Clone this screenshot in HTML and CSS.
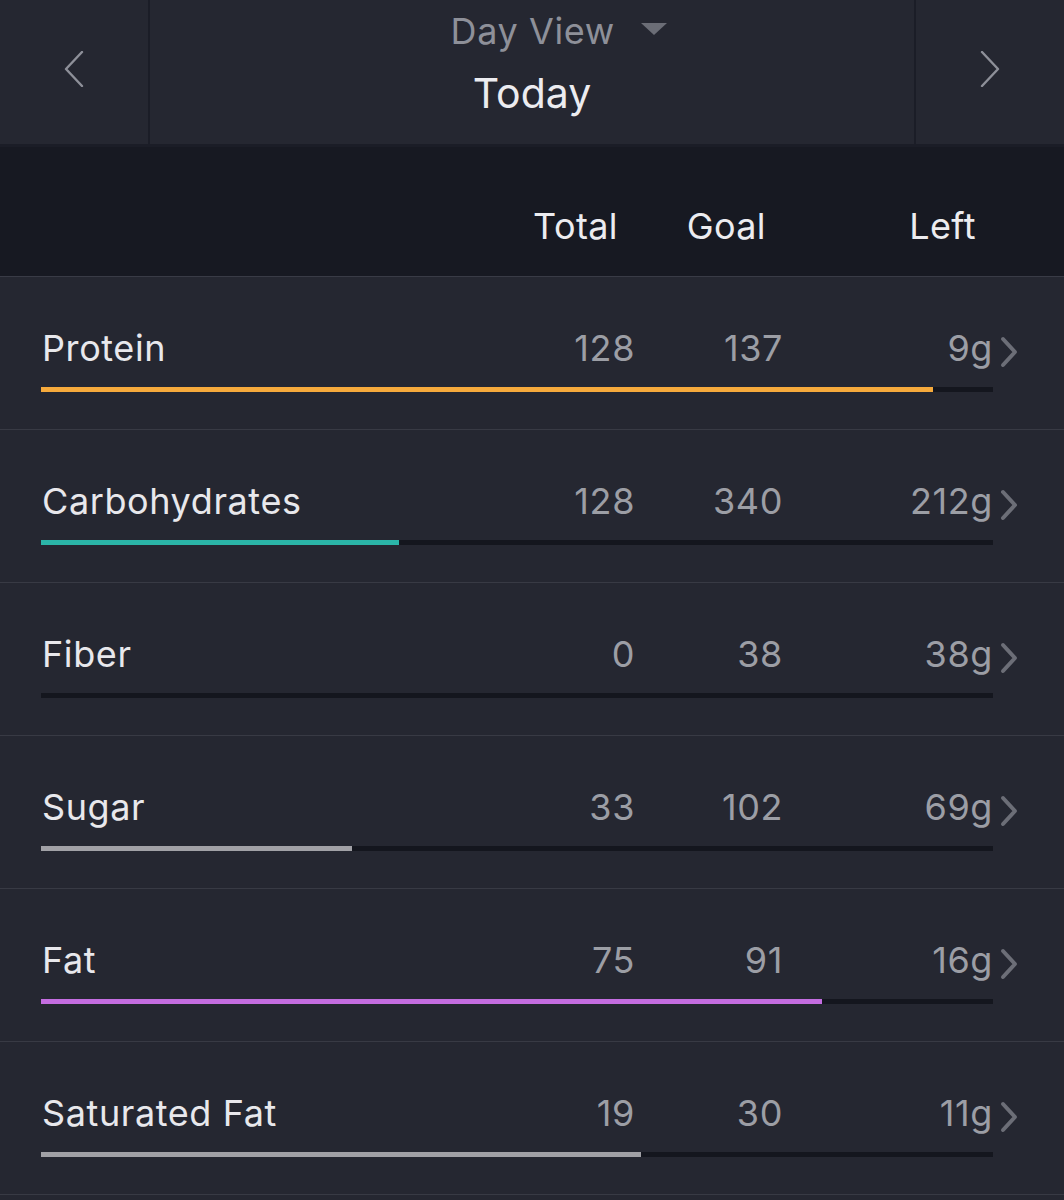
FILE: index.html
```html
<!DOCTYPE html>
<html lang="en">
<head>
    <meta charset="UTF-8">
    <meta name="viewport" content="width=device-width, initial-scale=1.0">
    <title>Nutrients</title>
    <link rel="stylesheet" href="styles.css">
</head>
<body>

    <!-- Date navigation -->
    <div class="nav">
        <div class="nav-btn">
            <svg width="20" height="36" viewBox="0 0 20 36"><path d="M18 1 L2 18 L18 35" fill="none" stroke="#8e9099" stroke-width="2.4" stroke-linecap="round" stroke-linejoin="round"/></svg>
        </div>
        <div class="nav-title">
            <div class="view">Day View <span class="caret"></span></div>
            <div class="day">Today</div>
        </div>
        <div class="nav-btn">
            <svg width="20" height="36" viewBox="0 0 20 36"><path d="M2 1 L18 18 L2 35" fill="none" stroke="#8e9099" stroke-width="2.4" stroke-linecap="round" stroke-linejoin="round"/></svg>
        </div>
    </div>

    <div class="head">
        <span></span>
        <span>Total</span>
        <span>Goal</span>
        <span>Left</span>
    </div>

    <div class="row">
        <div class="line">
            <span class="name">Protein</span>
            <span class="num">128</span>
            <span class="num">137</span>
            <span class="num">9g</span>
            <span class="chev"><svg width="20" height="32" viewBox="0 0 20 32"><path d="M4 3 L16 16 L4 29" fill="none" stroke="#6c6e77" stroke-width="4" stroke-linecap="round" stroke-linejoin="round"/></svg></span>
        </div>
        <div class="bar"><div class="fill protein" style="width: 93.7%"></div></div>
    </div>

    <div class="row">
        <div class="line">
            <span class="name">Carbohydrates</span>
            <span class="num">128</span>
            <span class="num">340</span>
            <span class="num">212g</span>
            <span class="chev"><svg width="20" height="32" viewBox="0 0 20 32"><path d="M4 3 L16 16 L4 29" fill="none" stroke="#6c6e77" stroke-width="4" stroke-linecap="round" stroke-linejoin="round"/></svg></span>
        </div>
        <div class="bar"><div class="fill carbs" style="width: 37.6%"></div></div>
    </div>

    <div class="row">
        <div class="line">
            <span class="name">Fiber</span>
            <span class="num">0</span>
            <span class="num">38</span>
            <span class="num">38g</span>
            <span class="chev"><svg width="20" height="32" viewBox="0 0 20 32"><path d="M4 3 L16 16 L4 29" fill="none" stroke="#6c6e77" stroke-width="4" stroke-linecap="round" stroke-linejoin="round"/></svg></span>
        </div>
        <div class="bar"><div class="fill" style="width: 0%"></div></div>
    </div>

    <div class="row">
        <div class="line">
            <span class="name">Sugar</span>
            <span class="num">33</span>
            <span class="num">102</span>
            <span class="num">69g</span>
            <span class="chev"><svg width="20" height="32" viewBox="0 0 20 32"><path d="M4 3 L16 16 L4 29" fill="none" stroke="#6c6e77" stroke-width="4" stroke-linecap="round" stroke-linejoin="round"/></svg></span>
        </div>
        <div class="bar"><div class="fill grey" style="width: 32.7%"></div></div>
    </div>

    <div class="row">
        <div class="line">
            <span class="name">Fat</span>
            <span class="num">75</span>
            <span class="num">91</span>
            <span class="num">16g</span>
            <span class="chev"><svg width="20" height="32" viewBox="0 0 20 32"><path d="M4 3 L16 16 L4 29" fill="none" stroke="#6c6e77" stroke-width="4" stroke-linecap="round" stroke-linejoin="round"/></svg></span>
        </div>
        <div class="bar"><div class="fill fat" style="width: 82%"></div></div>
    </div>

    <div class="row">
        <div class="line">
            <span class="name">Saturated Fat</span>
            <span class="num">19</span>
            <span class="num">30</span>
            <span class="num">11g</span>
            <span class="chev"><svg width="20" height="32" viewBox="0 0 20 32"><path d="M4 3 L16 16 L4 29" fill="none" stroke="#6c6e77" stroke-width="4" stroke-linecap="round" stroke-linejoin="round"/></svg></span>
        </div>
        <div class="bar"><div class="fill grey" style="width: 63%"></div></div>
    </div>

</body>
</html>
```

FILE: styles.css
```css
body {
    margin: 0;
    background-color: #252731;
    font-family: Inter, "Noto Sans", sans-serif;
    color: #e8e8ec;
}
.nav {
    display: flex;
    height: 144px;
    border-bottom: 3px solid #1b1d27;
}
.nav-btn {
    width: 150px;
    display: flex;
    align-items: center;
    justify-content: center;
    padding-bottom: 6px;
    box-sizing: border-box;
}
.nav-btn:first-child {
    border-right: 2px solid #1b1d27;
}
.nav-btn:last-child {
    border-left: 2px solid #1b1d27;
}
.nav-title {
    flex: 1;
    text-align: center;
    padding-top: 9px;
}
.view {
    font-size: 36px;
    letter-spacing: 0.6px;
    color: #8e9099;
    line-height: 44px;
    padding-left: 54px;
}
.caret {
    display: inline-block;
    width: 0;
    height: 0;
    border-left: 13px solid transparent;
    border-right: 13px solid transparent;
    border-top: 12px solid #6b6d76;
    margin-left: 16px;
    vertical-align: 9px;
}
.day {
    font-size: 41px;
    line-height: 50px;
    margin-top: 15px;
    color: #ececf0;
}
.head {
    display: grid;
    grid-template-columns: 1fr 110px 148px 210px;
    padding-right: 88px;
    height: 130px;
    background-color: #171922;
    border-bottom: 1px solid #393b46;
    font-size: 36px;
    letter-spacing: 0.4px;
    text-align: right;
    align-items: center;
    padding-top: 28px;
    box-sizing: border-box;
    color: #ececf0;
}
.row {
    height: 153px;
    border-bottom: 1px solid #383a44;
    box-sizing: border-box;
    padding: 47px 0 0 41px;
}
.line {
    display: grid;
    grid-template-columns: 1fr 122px 148px 210px 71px;
    align-items: center;
    height: 46px;
}
.name {
    font-size: 36px;
    letter-spacing: 0.6px;
    padding-left: 1px;
    color: #e8e8ec;
}
.num {
    font-size: 36px;
    letter-spacing: 0.6px;
    color: #9c9ea5;
    text-align: right;
}
.chev {
    padding-left: 6px;
    padding-top: 12px;
}
.bar {
    width: 952px;
    height: 5px;
    margin-top: 17px;
    background-color: #14161e;
}
.fill {
    height: 100%;
}
.protein {
    background-color: #f6aa3c;
}
.carbs {
    background-color: #2bb5a8;
}
.grey {
    background-color: #a1a1a6;
}
.fat {
    background-color: #c46de0;
}
```
